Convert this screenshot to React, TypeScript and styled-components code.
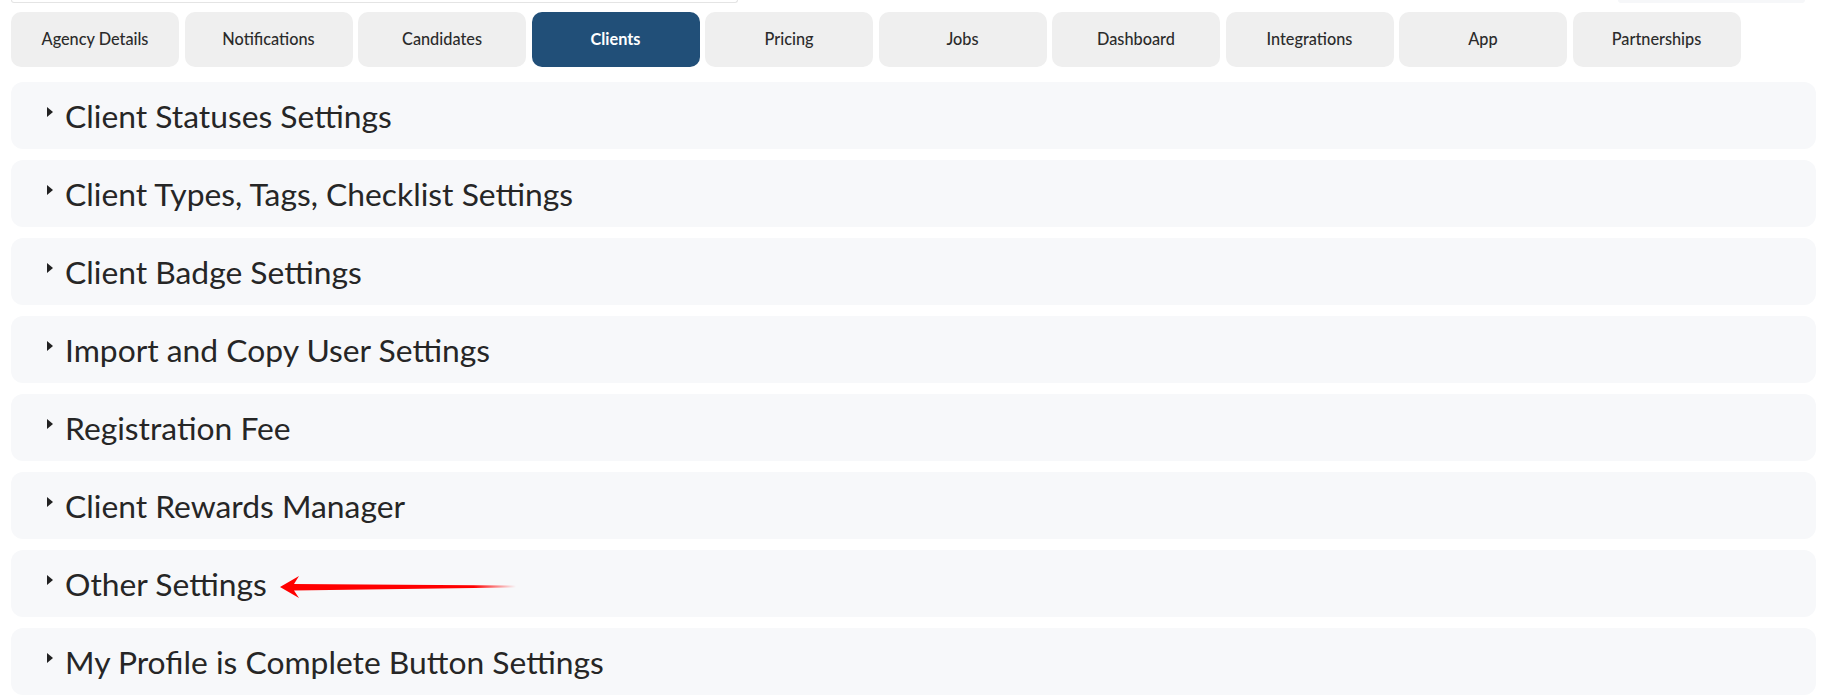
import React from "react";
import styled, { createGlobalStyle } from "styled-components";

const Global = createGlobalStyle`
  html, body { margin: 0; padding: 0; background: #ffffff; }
  body { font-family: "Lato", "Noto Sans", sans-serif; }
  * { box-sizing: border-box; }
`;

const Page = styled.div`
  width: 1831px;
  height: 700px;
  overflow: hidden;
  padding: 0 15px 0 11px;
`;

const TopStrip = styled.div`
  display: flex;
  justify-content: space-between;
  height: 3px;
`;

const SearchStub = styled.div`
  width: 727px;
  height: 3px;
  border: 1px solid #e4e4e4;
  border-top: none;
  border-radius: 0 0 6px 6px;
`;

const SideStub = styled.div`
  width: 187px;
  height: 3px;
  margin-right: 11px;
  background: #f6f7f9;
  border-radius: 0 0 8px 8px;
`;

const TabBar = styled.nav`
  display: flex;
  gap: 5.5px;
  margin-top: 9px;
`;

const Tab = styled.button<{ $active?: boolean }>`
  width: 168px;
  height: 55px;
  border: none;
  border-radius: 10px;
  background: ${(p) => (p.$active ? "#214f78" : "#efefef")};
  color: ${(p) => (p.$active ? "#ffffff" : "#2b2b2b")};
  font-family: "Lato", "Noto Sans", sans-serif;
  font-size: 16.3px;
  font-weight: ${(p) => (p.$active ? 700 : 500)};
  padding: 0 0 2px;
  cursor: pointer;
`;

const PanelList = styled.div`
  display: flex;
  flex-direction: column;
  gap: 11px;
  margin-top: 15px;
`;

const Panel = styled.div`
  position: relative;
  height: 67px;
  border-radius: 12px;
  background: #f7f8fa;
  display: flex;
  align-items: center;
  padding-left: 36px;
  gap: 12px;
`;

const Caret = styled.span`
  width: 0;
  height: 0;
  border-top: 5.5px solid transparent;
  border-bottom: 5.5px solid transparent;
  border-left: 6px solid #222;
  margin-top: -7px;
`;

const Title = styled.h3`
  margin: 0;
  font-family: "Lato", "Noto Sans", sans-serif;
  font-size: 31.8px;
  font-weight: 400;
  color: #262626;
`;

const ArrowSvg = styled.svg`
  position: absolute;
  left: 268px;
  top: 25px;
`;

const tabs = [
  "Agency Details",
  "Notifications",
  "Candidates",
  "Clients",
  "Pricing",
  "Jobs",
  "Dashboard",
  "Integrations",
  "App",
  "Partnerships",
];

const sections = [
  "Client Statuses Settings",
  "Client Types, Tags, Checklist Settings",
  "Client Badge Settings",
  "Import and Copy User Settings",
  "Registration Fee",
  "Client Rewards Manager",
  "Other Settings",
  "My Profile is Complete Button Settings",
];

const RedArrow = () => (
  <ArrowSvg width="240" height="24" viewBox="0 0 240 24">
    <defs>
      <linearGradient id="fade" x1="0" y1="0" x2="1" y2="0">
        <stop offset="0" stopColor="#ff0000" />
        <stop offset="0.82" stopColor="#ff0000" />
        <stop offset="1" stopColor="#ff0000" stopOpacity="0" />
      </linearGradient>
    </defs>
    <path
      d="M1 12 L20 1 L15 9 L237 10.5 L237 12.5 L15 15.5 L20 23 Z"
      fill="url(#fade)"
    />
  </ArrowSvg>
);

export default function App() {
  return (
    <>
      <Global />
      <Page>
        <TopStrip>
          <SearchStub />
          <SideStub />
        </TopStrip>
        <TabBar>
          {tabs.map((t) => (
            <Tab key={t} $active={t === "Clients"}>
              {t}
            </Tab>
          ))}
        </TabBar>
        <PanelList>
          {sections.map((s) => (
            <Panel key={s}>
              <Caret />
              <Title>{s}</Title>
              {s === "Other Settings" && <RedArrow />}
            </Panel>
          ))}
        </PanelList>
      </Page>
    </>
  );
}
